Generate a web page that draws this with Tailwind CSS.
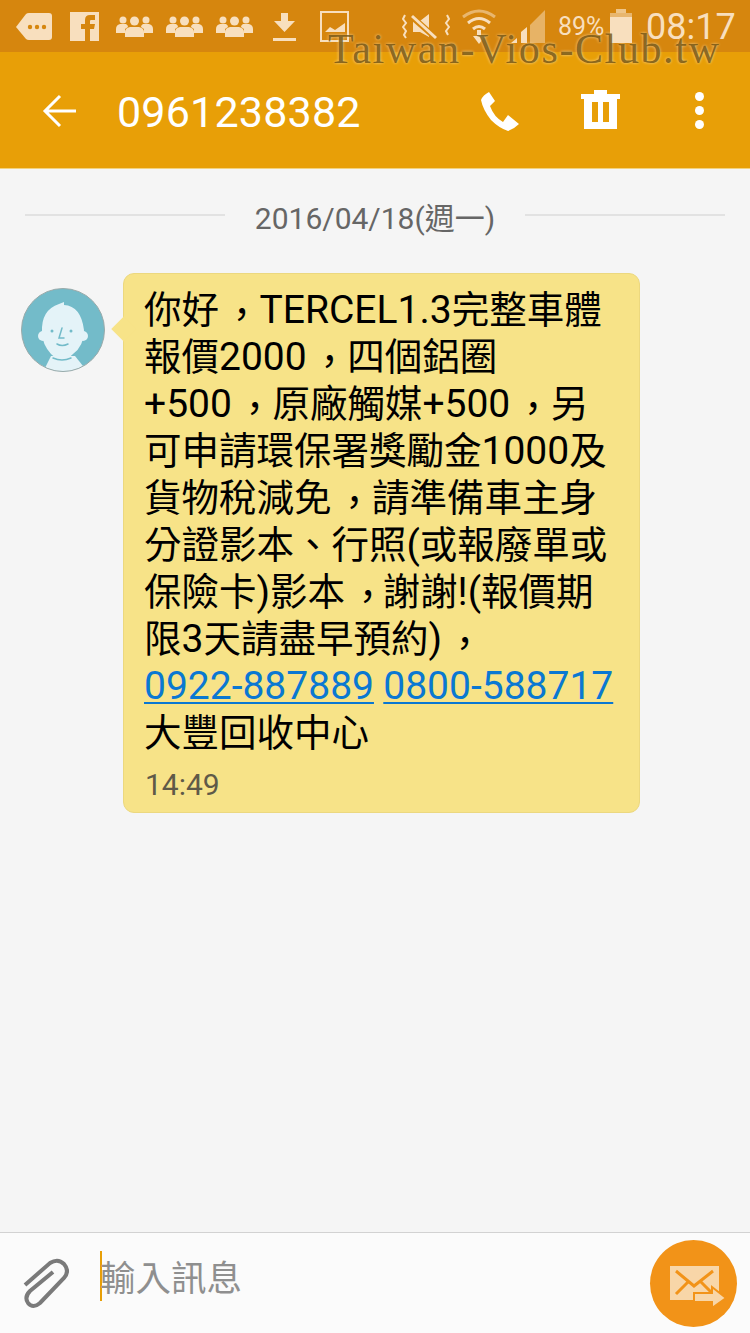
<!DOCTYPE html>
<html lang="zh-TW">
<head>
    <meta charset="UTF-8">
    <meta name="viewport" content="width=device-width, initial-scale=1.0">
    <title>0961238382</title>
    <script src="https://cdn.jsdelivr.net/npm/@tailwindcss/browser@4"></script>
</head>
<body class="relative w-[750px] h-[1333px] overflow-hidden bg-[#f5f5f5] flex flex-col font-['Roboto','Noto_Sans_CJK_TC',sans-serif]">

    <!-- status bar -->
    <div class="h-[52px] shrink-0 bg-[#d6860e] relative text-[#f8dfbe]">
        <svg class="absolute left-[16px] top-[12px] w-[37px] h-[29px]" viewBox="0 0 37 29" fill="#f8dfbe"><path d="M0 15 10 2Q11 1 13 1H33Q36 1 36 4V25Q36 28 33 28H13Q11 28 10 27Z"/><circle cx="14" cy="15" r="2.2" fill="#d6860e"/><circle cx="21" cy="15" r="2.2" fill="#d6860e"/><circle cx="28" cy="15" r="2.2" fill="#d6860e"/></svg>
        <svg class="absolute left-[70px] top-[12px] w-[29px] h-[29px]" viewBox="0 0 29 29"><rect width="29" height="29" fill="#f8dfbe"/><path d="M15 29V17H11V12H15V8Q15 3 20 3H25V8H21Q20 8 20 9V12H25L24 17H20V29Z" fill="#d6860e"/></svg>
        <svg class="absolute left-[116px] top-[15px] w-[37px] h-[22px]" viewBox="0 0 37 22" fill="#f8dfbe"><circle cx="7" cy="5" r="3.5"/><circle cx="30" cy="5" r="3.5"/><path d="M0 18V14Q0 10 4 9H10Q12 10 12 12L9 14V18ZM37 18V14Q37 10 33 9H27Q25 10 25 12L28 14V18Z"/><circle cx="18.500" cy="6" r="4.500"/><path d="M9 22V17Q9 13 14 12H23Q28 13 28 17V22Z"/></svg>
        <svg class="absolute left-[166px] top-[15px] w-[37px] h-[22px]" viewBox="0 0 37 22" fill="#f8dfbe"><circle cx="7" cy="5" r="3.5"/><circle cx="30" cy="5" r="3.5"/><path d="M0 18V14Q0 10 4 9H10Q12 10 12 12L9 14V18ZM37 18V14Q37 10 33 9H27Q25 10 25 12L28 14V18Z"/><circle cx="18.500" cy="6" r="4.500"/><path d="M9 22V17Q9 13 14 12H23Q28 13 28 17V22Z"/></svg>
        <svg class="absolute left-[216px] top-[15px] w-[37px] h-[22px]" viewBox="0 0 37 22" fill="#f8dfbe"><circle cx="7" cy="5" r="3.5"/><circle cx="30" cy="5" r="3.5"/><path d="M0 18V14Q0 10 4 9H10Q12 10 12 12L9 14V18ZM37 18V14Q37 10 33 9H27Q25 10 25 12L28 14V18Z"/><circle cx="18.500" cy="6" r="4.500"/><path d="M9 22V17Q9 13 14 12H23Q28 13 28 17V22Z"/></svg>
        <svg class="absolute left-[273px] top-[13px] w-[23px] h-[28px]" viewBox="0 0 23 28" fill="#f8dfbe"><path d="M8 0H15V8H22L11.500 19 1 8H8Z"/><rect y="25" width="23" height="3"/></svg>
        <svg class="absolute left-[320px] top-[11px] w-[29px] h-[31px]" viewBox="0 0 29 31"><rect x="1" y="1" width="27" height="29" fill="none" stroke="#f8dfbe" stroke-width="2"/><path d="M5 21 10 16 15 19 25 12V21Z" fill="#f8dfbe"/></svg>
        <svg class="absolute left-[402px] top-[13px] w-[48px] h-[28px]" viewBox="0 0 48 28" fill="none" stroke="#f8dfbe"><path d="M3 2 1 6 4 10 1 14 4 18 2 22 4 25" stroke-width="2"/><path d="M45 2 47 6 44 10 47 14 44 18 46 22" stroke-width="2"/><path d="M11 8H18L27 1V24L18 19H11Z" fill="#f8dfbe" stroke="none"/><path d="M9 3 35 26" stroke="#d6860e" stroke-width="6"/><path d="M10 3 34 25" stroke-width="3"/></svg>
        <svg class="absolute left-[461px] top-[8px] w-[36px] h-[37px]" viewBox="0 0 36 37" fill="none" stroke="#f8dfbe" stroke-width="3"><path d="M2 9Q18 -3 34 9" stroke-opacity=".55"/><path d="M7 15Q18 6 29 15"/><path d="M12 21Q18 16 24 21"/><path d="M16 22H20V28H24L18 36 12 28H16Z" fill="#f8dfbe" stroke="none"/></svg>
        <svg class="absolute left-[510px] top-[10px] w-[36px] h-[34px]" viewBox="0 0 36 34" fill="#f8dfbe"><path d="M1 33 7 28V33Z"/><path d="M11 33V22L17 17V33Z"/><path d="M20 33V15L35 0V33Z" fill-opacity=".5"/></svg>
        <span class="absolute left-[558px] top-[12px] text-[25px] leading-[30px]">89%</span>
        <svg class="absolute left-[610px] top-[9px] w-[22px] h-[34px]" viewBox="0 0 22 34" fill="#f8dfbe"><rect x="6" width="10" height="4" fill-opacity=".7"/><rect y="4" width="22" height="6" fill-opacity=".55"/><rect y="8" width="22" height="26"/></svg>
        <span class="absolute left-[646px] top-[7px] text-[36px] leading-[40px]">08:17</span>
    </div>

    <!-- action bar -->
    <header class="h-[117px] shrink-0 bg-[#e89f07] border-b border-[#f3d27e] flex items-center text-white relative">
        <svg class="ml-[42px] mt-[2px] w-[34px] h-[34px]" viewBox="0 0 34 34" fill="none" stroke="#fff" stroke-width="3"><path d="M18 2 3 17 18 32M3 17H34"/></svg>
        <h1 class="ml-[41px] mt-[4px] text-[43px] leading-[48px] font-normal tracking-[0.2px]">0961238382</h1>
        <svg class="absolute left-[481px] top-[38px] w-[38px] h-[42px]" viewBox="0 0 38 42" fill="#fff"><path d="M8 2 14 11 9 16Q13 27 22 32L27 25 38 34Q33 39 27 41 18 38 10 30 2 20 0 10 2 5 8 2Z"/></svg>
        <svg class="absolute left-[581px] top-[38px] w-[39px] h-[39px]" viewBox="0 0 39 39" fill="#fff"><path d="M0 4H13V0H26V4H39V9H36V39H3V9H0ZM11 12V32H17V12ZM22 12V32H28V12Z" fill-rule="evenodd"/></svg>
        <div class="absolute left-[695px] top-[40px] flex flex-col gap-[5px]">
            <span class="w-[9px] h-[9px] rounded-full bg-white"></span>
            <span class="w-[9px] h-[9px] rounded-full bg-white"></span>
            <span class="w-[9px] h-[9px] rounded-full bg-white"></span>
        </div>
    </header>

    <!-- conversation -->
    <main class="flex-1 min-h-0 flex flex-col">
        <div class="mt-[30px] px-[25px] flex items-center gap-[30px]">
            <div class="flex-1 h-[2px] mb-[8px] bg-[#e2e2e2]"></div>
            <span class="text-[30px] leading-[40px] text-[#666]">2016/04/18(週一)</span>
            <div class="flex-1 h-[2px] mb-[8px] bg-[#e2e2e2]"></div>
        </div>
        <div class="mt-[34px] ml-[21px] flex items-start">
            <svg class="mt-[15px] w-[84px] h-[84px] shrink-0" viewBox="0 0 84 84">
                <defs><clipPath id="av"><circle cx="42" cy="42" r="41.500"/></clipPath></defs>
                <circle cx="42" cy="42" r="41.500" fill="#73bbc9"/>
                <g clip-path="url(#av)" fill="#e4f3f8">
                    <path d="M22 84 30 68H54L62 78 60 84Z"/>
                    <circle cx="22" cy="48" r="5"/><circle cx="62" cy="48" r="5"/>
                    <path d="M21 44Q20 22 38 16L43 14 43 17Q60 18 63 42 63 58 52 66 46 72 42 72 36 72 30 66 21 56 21 44Z"/>
                </g>
                <g fill="none" stroke="#73bbc9" stroke-width="1.500" stroke-linecap="round"><path d="M41 40 38 50 43 50M36 56Q41 59 47 56M32 70Q41 74 50 70"/></g>
                <circle cx="31" cy="43" r="1.500" fill="#73bbc9"/><circle cx="50" cy="43" r="1.500" fill="#73bbc9"/>
                <circle cx="42" cy="42" r="41.500" fill="none" stroke="#9aa" stroke-width="1"/>
            </svg>
            <div class="relative ml-[18px] w-[517px] h-[540px] bg-[#f7e388] border border-[#ecd87f] rounded-[11px] pt-[13px] pl-[20px] text-[37.5px] leading-[47px] text-black whitespace-nowrap">
                <span class="absolute left-[-9px] top-[46px] w-[18px] h-[18px] rotate-45 bg-[#f7e388]"></span>
                <p class="relative">你好<span class="inline-block translate-x-[4px] translate-y-[5px] pr-[3px]">，</span><span class="text-[39px] leading-[0]">TERCEL1.3</span>完整車體<br>報價<span class="text-[39px] leading-[0]">2000</span><span class="inline-block translate-x-[4px] translate-y-[5px] pr-[3px]">，</span>四個鋁圈<br><span class="text-[39px] leading-[0]">+500</span><span class="inline-block translate-x-[4px] translate-y-[5px] pr-[3px]">，</span>原廠觸媒<span class="text-[39px] leading-[0]">+500</span><span class="inline-block translate-x-[4px] translate-y-[5px] pr-[3px]">，</span>另<br>可申請環保署獎勵金<span class="text-[39px] leading-[0]">1000</span>及<br>貨物稅減免<span class="inline-block translate-x-[4px] translate-y-[5px] pr-[3px]">，</span>請準備車主身<br>分證影本、行照<span class="text-[39px] leading-[0]">(</span>或報廢單或<br>保險卡<span class="text-[39px] leading-[0]">)</span>影本<span class="inline-block translate-x-[4px] translate-y-[5px]">，</span>謝謝<span class="text-[39px] leading-[0]">!(</span>報價期<br>限<span class="text-[39px] leading-[0]">3</span>天請盡早預約<span class="text-[39px] leading-[0]">)</span><span class="inline-block translate-x-[4px] translate-y-[5px]">，</span><br><span class="text-[39px] leading-[0] text-[#0a78d2] underline underline-offset-[3px] decoration-2">0922-887889</span> <span class="text-[39px] leading-[0] text-[#0a78d2] underline underline-offset-[3px] decoration-2">0800-588717</span><br>大豐回收中心</p>
                <p class="mt-[8px] ml-[1px] text-[30px] leading-[40px] text-[#5f5a48]">14:49</p>
            </div>
        </div>
    </main>

    <!-- input bar -->
    <footer class="h-[101px] shrink-0 bg-[#fbfbfb] border-t border-[#d2d2d2] relative">
        <svg class="absolute left-[23px] top-[25px] w-[46px] h-[51px]" viewBox="0 0 46 51" fill="none" stroke="#7a7a7a" stroke-width="4"><path d="M2 27 27 5Q35 0 41 6 47 13 41 20L17 45Q10 51 5 45 1 39 7 33L30 14"/></svg>
        <div class="absolute left-[100px] top-[18px] w-[2px] h-[50px] bg-[#e89f07]"></div>
        <span class="absolute left-[100px] top-[24px] text-[35.5px] leading-[44px] text-[#8f8f8f]">輸入訊息</span>
        <div class="absolute left-[650px] top-[7px] w-[87px] h-[87px] rounded-full bg-[#f29318]">
            <svg class="absolute left-[20px] top-[26px] w-[56px] h-[42px]" viewBox="0 0 56 42">
                <rect width="49" height="34" fill="#f8d6a8"/>
                <path d="M6 5 24 20 43 5M6 28 18 16M43 28 31 16" fill="none" stroke="#f29318" stroke-width="3"/>
                <path d="M24 27H42V21L56 32 42 42V36H24Z" fill="#f8d6a8" stroke="#f29318" stroke-width="2"/>
            </svg>
        </div>
    </footer>

    <!-- watermark over the top bars -->
    <div class="absolute left-[328px] top-[25px] text-[42px] leading-[48px] tracking-[1.6px] font-['Liberation_Serif',serif] text-[#6f4f0c]/80 [text-shadow:0_0_3px_rgba(255,235,190,0.8)] whitespace-nowrap">Taiwan-Vios-Club.tw</div>
</body>
</html>
